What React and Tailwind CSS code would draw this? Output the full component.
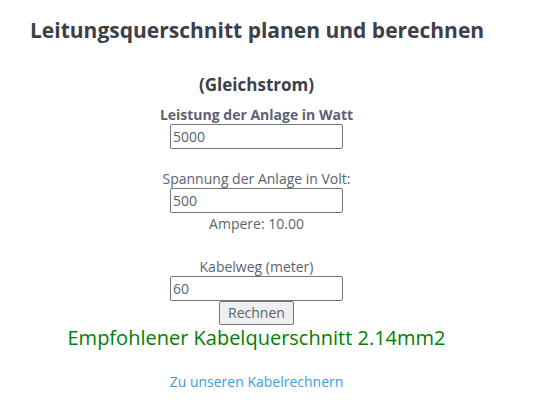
export default function App() {
  return (
    <div className="w-[533px] h-[404px] bg-white font-['Open_Sans',sans-serif] text-[#5b6270]">
      <h1 className="pl-[30px] pt-[16px] text-[21px] leading-[28px] font-bold text-[#3b404a]">
        Leitungsquerschnitt planen und berechnen
      </h1>
      <div className="w-[513px] flex flex-col items-center text-center">
        <h2 className="mt-[29px] text-[17px] leading-[24px] font-bold text-[#3b404a]">(Gleichstrom)</h2>
        <label className="mt-[8px] text-[14px] leading-[19px] font-bold">Leistung der Anlage in Watt</label>
        <input
          defaultValue="5000"
          className="w-[173px] h-[25px] border border-[#767676] rounded-[2px] px-[2px] text-[14px] text-[#5b6270] outline-none"
        />
        <label className="mt-[20px] text-[14px] leading-[19px]">Spannung der Anlage in Volt:</label>
        <input
          defaultValue="500"
          className="w-[173px] h-[25px] border border-[#767676] rounded-[2px] px-[2px] text-[14px] text-[#5b6270] outline-none"
        />
        <p className="mt-[1px] text-[14px] leading-[19px]">Ampere: 10.00</p>
        <label className="mt-[24px] text-[14px] leading-[19px]">Kabelweg (meter)</label>
        <input
          defaultValue="60"
          className="w-[173px] h-[25px] border border-[#767676] rounded-[2px] px-[2px] text-[14px] text-[#5b6270] outline-none"
        />
        <button className="h-[24px] px-[8px] bg-[#efefef] border border-[#767676] rounded-[2px] text-[14px] leading-[20px]">
          Rechnen
        </button>
        <p className="text-[20px] leading-[26px] text-[#008000]">Empfohlener Kabelquerschnitt 2.14mm2</p>
        <a href="#" className="mt-[21px] text-[14px] leading-[19px] text-[#3d9cdc]">
          Zu unseren Kabelrechnern
        </a>
      </div>
    </div>
  );
}
